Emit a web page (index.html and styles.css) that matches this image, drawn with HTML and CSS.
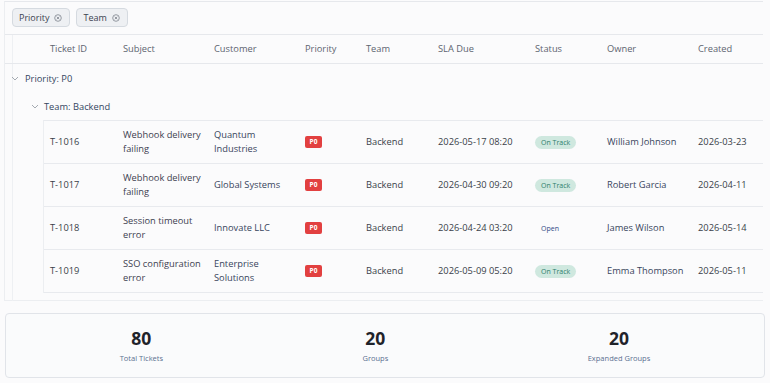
FILE: index.html
```html
<!DOCTYPE html>
<html lang="en">
<head>
<meta charset="utf-8">
<title>Tickets grouped</title>
<link rel="stylesheet" href="styles.css">
</head>
<body>
<div class="grid">
  <div class="groupbar">
    <span class="chip">Priority <svg class="x" viewBox="0 0 8 8"><circle cx="4" cy="4" r="3.3"/><path d="M2.7 2.7l2.6 2.6M5.3 2.7L2.7 5.3"/></svg></span>
    <span class="chip">Team <svg class="x" viewBox="0 0 8 8"><circle cx="4" cy="4" r="3.3"/><path d="M2.7 2.7l2.6 2.6M5.3 2.7L2.7 5.3"/></svg></span>
  </div>
  <div class="table">
    <div class="row head">
      <div class="c">Ticket ID</div>
      <div class="c">Subject</div>
      <div class="c">Customer</div>
      <div class="c">Priority</div>
      <div class="c">Team</div>
      <div class="c">SLA Due</div>
      <div class="c">Status</div>
      <div class="c">Owner</div>
      <div class="c">Created</div>
    </div>
    <div class="group lvl1"><svg class="chev" viewBox="0 0 8 5"><path d="M1 1l3 3 3-3"/></svg>Priority: P0</div>
    <div class="group lvl2"><svg class="chev" viewBox="0 0 8 5"><path d="M1 1l3 3 3-3"/></svg>Team: Backend</div>
    <div class="rows">
      <div class="row">
        <div class="c">T-1016</div>
        <div class="c subj">Webhook delivery failing</div>
        <div class="c cust">Quantum Industries</div>
        <div class="c"><span class="prio">P0</span></div>
        <div class="c">Backend</div>
        <div class="c">2026-05-17 08:20</div>
        <div class="c"><span class="status ok">On Track</span></div>
        <div class="c own">William Johnson</div>
        <div class="c">2026-03-23</div>
      </div>
      <div class="row">
        <div class="c">T-1017</div>
        <div class="c subj">Webhook delivery failing</div>
        <div class="c cust">Global Systems</div>
        <div class="c"><span class="prio">P0</span></div>
        <div class="c">Backend</div>
        <div class="c">2026-04-30 09:20</div>
        <div class="c"><span class="status ok">On Track</span></div>
        <div class="c own">Robert Garcia</div>
        <div class="c">2026-04-11</div>
      </div>
      <div class="row">
        <div class="c">T-1018</div>
        <div class="c subj">Session timeout error</div>
        <div class="c cust">Innovate LLC</div>
        <div class="c"><span class="prio">P0</span></div>
        <div class="c">Backend</div>
        <div class="c">2026-04-24 03:20</div>
        <div class="c"><span class="status open">Open</span></div>
        <div class="c own">James Wilson</div>
        <div class="c">2026-05-14</div>
      </div>
      <div class="row">
        <div class="c">T-1019</div>
        <div class="c subj">SSO configuration error</div>
        <div class="c cust">Enterprise Solutions</div>
        <div class="c"><span class="prio">P0</span></div>
        <div class="c">Backend</div>
        <div class="c">2026-05-09 05:20</div>
        <div class="c"><span class="status ok">On Track</span></div>
        <div class="c own">Emma Thompson</div>
        <div class="c">2026-05-11</div>
      </div>
    </div>
  </div>
</div>
<div class="stats">
  <div class="stat"><div class="num">80</div><div class="lbl">Total Tickets</div></div>
  <div class="stat"><div class="num">20</div><div class="lbl">Groups</div></div>
  <div class="stat"><div class="num">20</div><div class="lbl">Expanded Groups</div></div>
</div>
</body>
</html>
```
FILE: styles.css
```css
* { box-sizing: border-box; }
html, body { margin: 0; padding: 0; }
body {
  background: #fbfbfc;
  font-family: "Open Sans", "Noto Sans", sans-serif;
  font-size: 9.3px;
  color: #3a3f49;
}
.grid {
  margin: 1px 7px 0 4px;
  border-top: 1px solid #e6e8ec;
  border-left: 1px solid #eceef1;
  border-bottom: 1px solid #eceef1;
  height: 300px;
}
.groupbar {
  height: 33px;
  padding: 6px 0 0 7px;
  display: flex;
  gap: 6px;
  align-items: flex-start;
  border-bottom: 1px solid #e6e8ec;
}
.chip {
  height: 19px;
  display: inline-flex;
  align-items: center;
  gap: 5px;
  padding: 0 7px 0 6px;
  background: #eef0f3;
  border: 1px solid #d5dae0;
  border-radius: 4px;
  color: #3c4350;
  font-size: 9px;
}
.x { width: 8px; height: 8px; fill: none; stroke: #8a9099; stroke-width: 0.9; }
.table {
  margin-left: 7px;
  border-left: 1px solid #eef0f3;
  height: 266px;
}
.row {
  display: grid;
  grid-template-columns: 73px 91px 91px 61px 72px 97px 72px 91px 70px;
  align-items: center;
}
.head {
  height: 29px;
  border-bottom: 1px solid #e6e8ec;
  color: #5d6470;
  margin-left: -8px;
  padding-left: 39px;
}
.c { padding: 0 4px 0 6px; line-height: 14.5px; }
.group {
  height: 28px;
  display: flex;
  align-items: center;
  color: #34465f;
}
.lvl1 { padding-left: 0; }
.lvl2 { padding-left: 18px; }
.chev { width: 8px; height: 5px; fill: none; stroke: #9aa0a8; stroke-width: 0.9; margin-right: 5px; }
.lvl1 .chev { margin-left: -2px; margin-right: 6px; }
.rows {
  margin-left: 30px;
  border-top: 1px solid #e8eaee;
  border-left: 1px solid #eceef1;
}
.rows .row {
  height: 43px;
  border-bottom: 1px solid #e8eaee;
}
.subj { color: #3d4150; }
.cust, .own { color: #38455c; }
.prio {
  display: inline-block;
  width: 17px;
  height: 12px;
  line-height: 12px;
  text-align: center;
  background: #e24040;
  color: #fff;
  font-weight: 700;
  font-size: 6.5px;
  border-radius: 2px;
  vertical-align: middle;
}
.status {
  display: inline-block;
  height: 13px;
  line-height: 13px;
  padding: 0 6px;
  border-radius: 7px;
  font-size: 7px;
  vertical-align: middle;
}
.status.ok { background: #cfe8df; color: #2d7f6c; }
.status.open { color: #2f4a86; }
.stats {
  margin: 12px 5px 0 5px;
  height: 65px;
  border: 1px solid #e1e4e9;
  border-radius: 4px;
  background: #fafbfc;
  padding: 13px 14px 12px;
  display: flex;
  justify-content: space-around;
}
.stat { display: flex; flex-direction: column; align-items: center; }
.num { font-size: 17.5px; font-weight: 700; line-height: 22px; color: #1f232a; }
.lbl { font-size: 7.5px; line-height: 10px; margin-top: 4px; color: #5a7091; }
```
